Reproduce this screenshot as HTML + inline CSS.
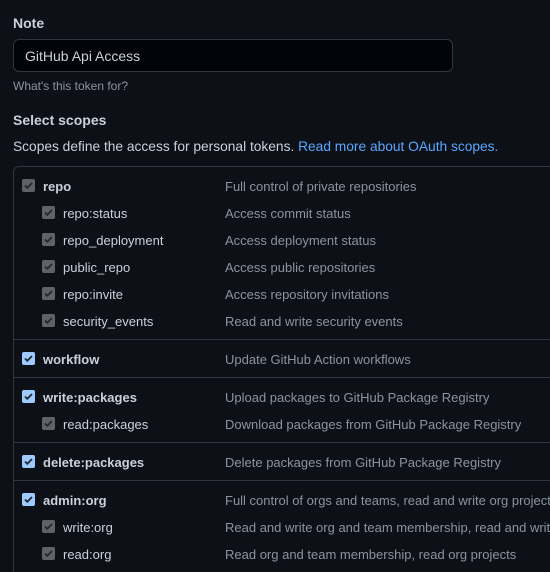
<!DOCTYPE html><html><head><style>
html,body{margin:0;width:550px;height:572px;overflow:hidden}
body{background:#0d1117;color:#c9d1d9;font-family:"Liberation Sans",sans-serif;font-size:13px;position:relative}
.a{position:absolute;white-space:nowrap}
.cb{position:absolute;width:13px;height:13px;border-radius:2px;background:#5f6368}
.cb.b{background:#9ecbff}
.cb svg{position:absolute;left:1px;top:1px}
.sep{position:absolute;left:14px;width:536px;height:1px;background:#30363d}
</style></head><body>
<div class="a" style="left:13px;top:15px;font-weight:bold;font-size:14px">Note</div>
<div class="a" style="left:13px;top:39px;width:438px;height:31px;border:1px solid #30363d;border-radius:6px;background:#010409"></div>
<div class="a" style="left:25px;top:48px;font-size:14px">GitHub Api Access</div>
<div class="a" style="left:13px;top:79px;font-size:12px;color:#8b949e">What's this token for?</div>
<div class="a" style="left:13px;top:112px;font-weight:bold;font-size:14px">Select scopes</div>
<div class="a" style="left:13px;top:139px;font-size:13.75px">Scopes define the access for personal tokens. <span style="color:#58a6ff">Read more about OAuth scopes.</span></div>
<div class="a" style="left:13px;top:166px;width:537px;height:406px;border-left:1px solid #30363d;border-top:1px solid #30363d;border-radius:6px 0 0 0"></div>
<div class="sep" style="top:339px"></div>
<div class="sep" style="top:377px"></div>
<div class="sep" style="top:442px"></div>
<div class="sep" style="top:480px"></div>
<div id="rows"></div>
<script>
var r=[[186,0,'repo','Full control of private repositories',0],
[213,1,'repo:status','Access commit status',0],
[240,1,'repo_deployment','Access deployment status',0],
[267,1,'public_repo','Access public repositories',0],
[294,1,'repo:invite','Access repository invitations',0],
[321,1,'security_events','Read and write security events',0],
[359,0,'workflow','Update GitHub Action workflows',1],
[397,0,'write:packages','Upload packages to GitHub Package Registry',1],
[424,1,'read:packages','Download packages from GitHub Package Registry',0],
[462,0,'delete:packages','Delete packages from GitHub Package Registry',1],
[500,0,'admin:org','Full control of orgs and teams, read and write org projects',1],
[527,1,'write:org','Read and write org and team membership, read and write org projects',0],
[554,1,'read:org','Read org and team membership, read org projects',0]];
var h='';r.forEach(function(x){var y=x[0],s=x[1],cx=s?42:22,tx=s?63:43;
h+='<div class="cb'+(x[4]?' b':'')+'" style="left:'+cx+'px;top:'+(y-7)+'px"><svg width="11" height="11" viewBox="0 0 11 11"><path d="M2 5.5l2.3 2.3L9 3" stroke="#24292f" stroke-width="1.8" fill="none"/></svg></div>';
h+='<div class="a" style="left:'+tx+'px;top:'+(y-7)+'px;'+(s?'':'font-weight:bold;')+'color:#c9d1d9">'+x[2]+'</div>';
h+='<div class="a" style="left:225px;top:'+(y-7)+'px;color:#8b949e;max-width:325px;overflow:hidden">'+x[3]+'</div>';});
document.getElementById('rows').innerHTML=h;
</script>
</body></html>
